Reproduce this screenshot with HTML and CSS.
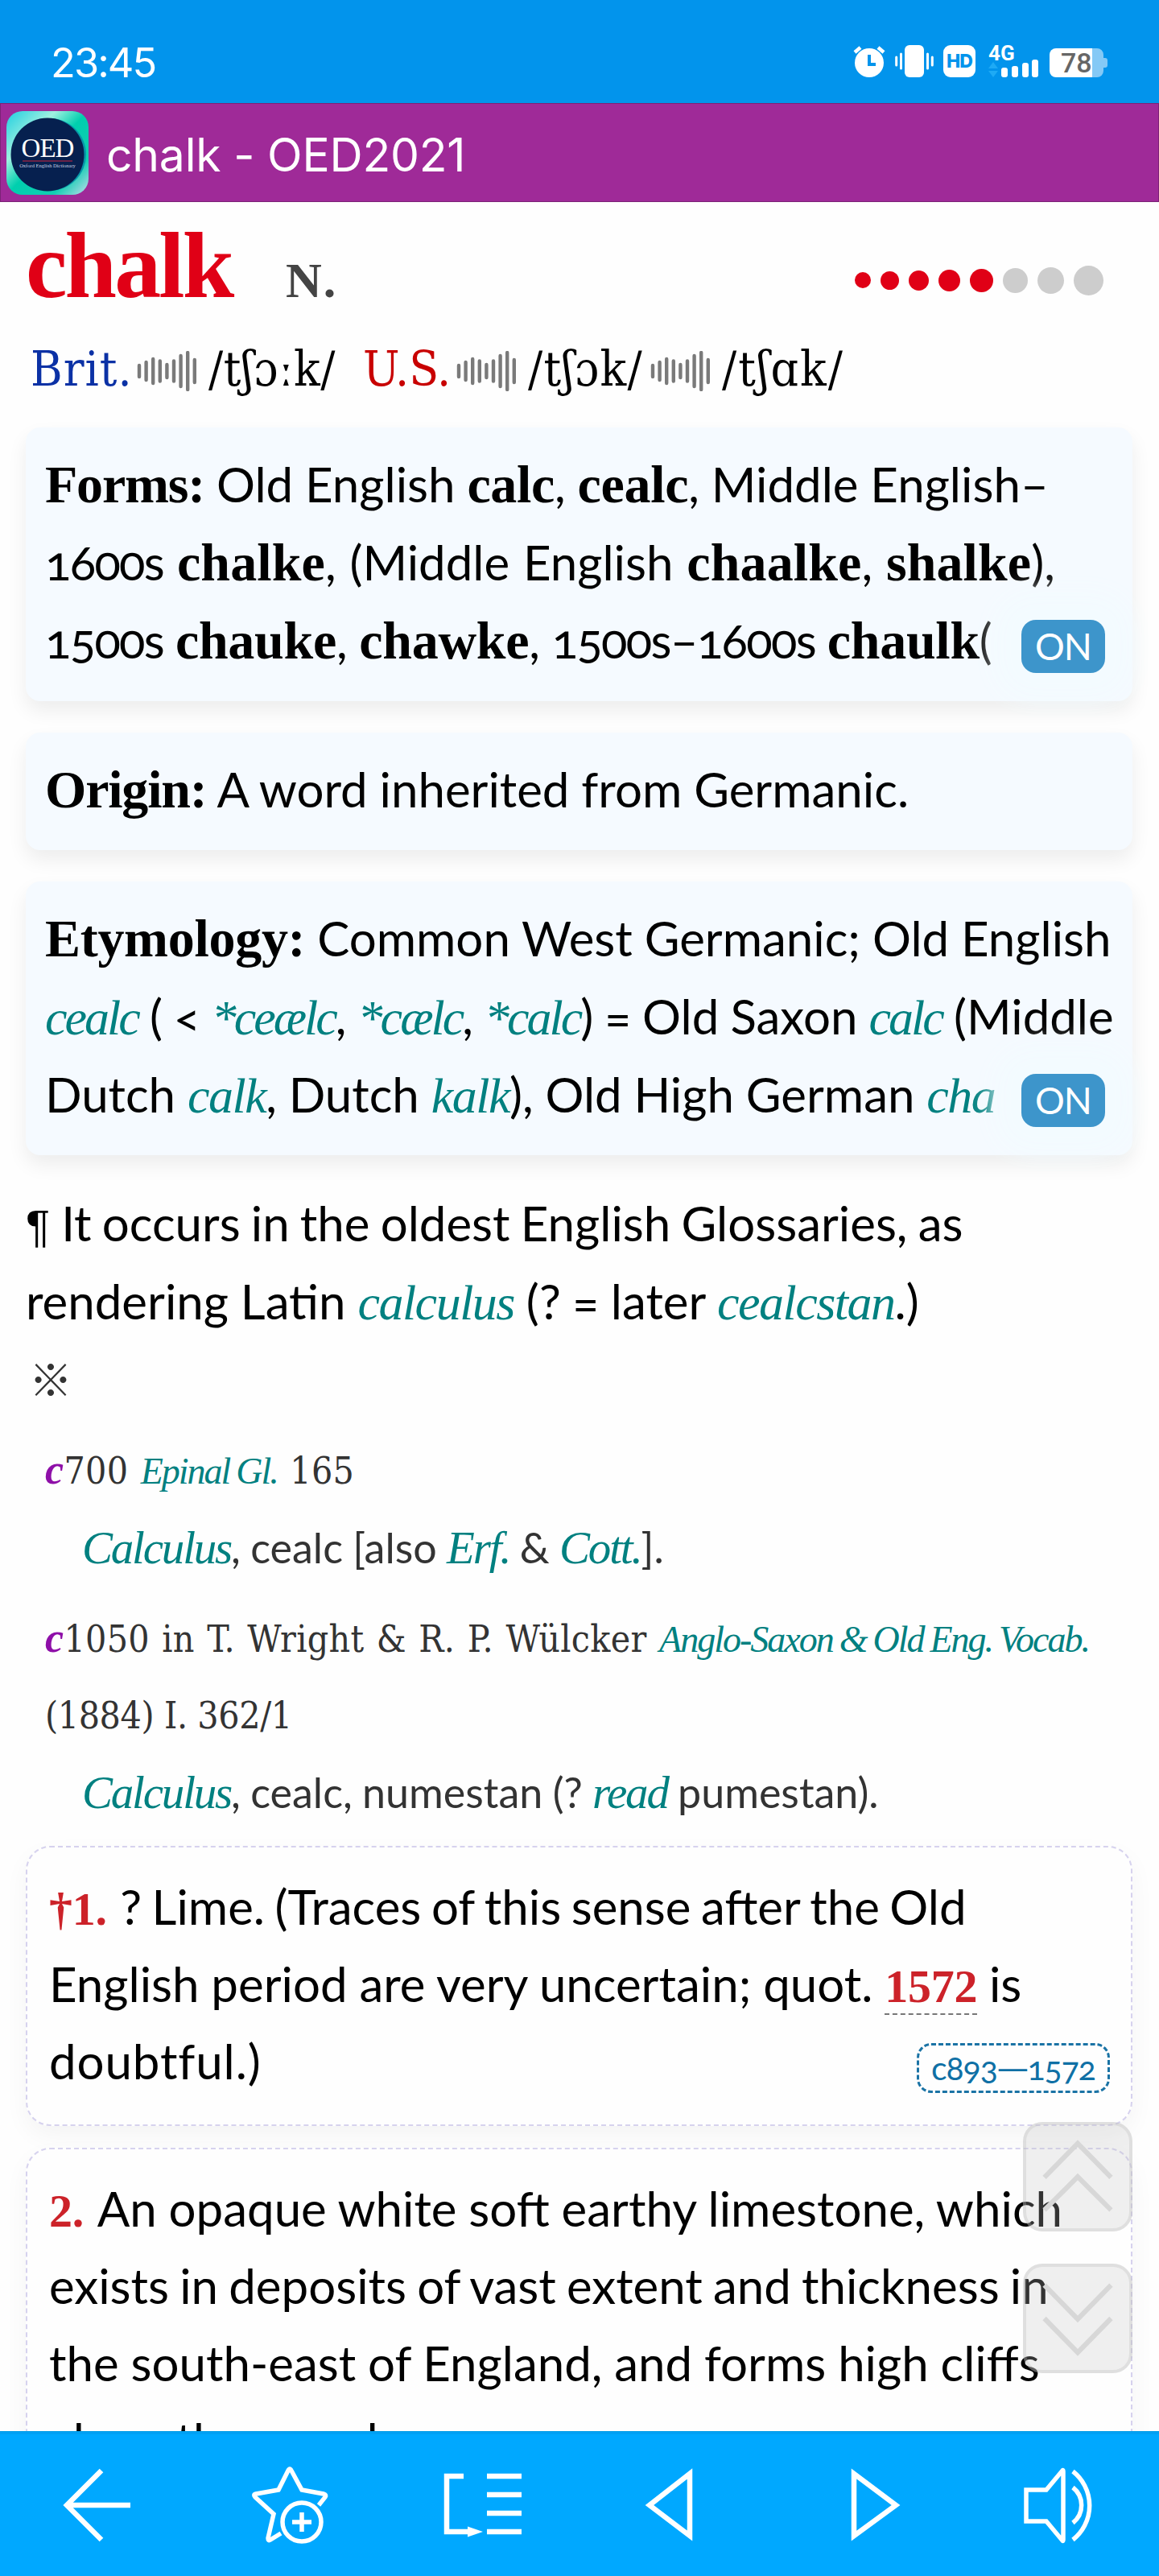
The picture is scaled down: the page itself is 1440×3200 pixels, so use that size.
FILE: index.html
```
<!DOCTYPE html>
<html lang="en">
<head>
    <meta charset="UTF-8">
    <meta name="viewport" content="width=device-width, initial-scale=1.0">
    <title>chalk - OED2021</title>
    <link rel="stylesheet" href="styles.css">
</head>
<body>
    <div class="status">
        <span class="time">23:45</span>
        <div class="status-icons">
            <svg class="alarm" width="40" height="40" viewBox="0 0 40 40">
                <circle cx="20" cy="22" r="18" fill="#fff"/>
                <path d="M20 12v12h8" fill="none" stroke="#0294ec" stroke-width="4"/>
                <path d="M2 9l7-6M31 3l7 6" stroke="#fff" stroke-width="4.5"/>
            </svg>
            <svg class="vibrate" width="48" height="40" viewBox="0 0 48 40">
                <rect x="12" width="24" height="40" rx="6" fill="#fff"/>
                <path d="M1.7 15v10M7.5 11v18M40.5 11v18M46.3 15v10" stroke="#fff" stroke-width="3" stroke-linecap="round"/>
            </svg>
            <span class="hd">HD</span>
            <svg class="signal" width="64" height="40" viewBox="0 0 64 40">
                <text x="0" y="19" class="net">4G</text>
                <path d="M0 29l6-8 6 8zM0 32h12l-6 8z" fill="#1eaaf5"/>
                <rect x="16" y="28" width="8" height="12" rx="3" fill="#fff"/>
                <rect x="29" y="26" width="8" height="14" rx="3" fill="#fff"/>
                <rect x="42" y="22" width="8" height="18" rx="3" fill="#fff"/>
                <rect x="54" y="18" width="8" height="22" rx="3" fill="#fff"/>
            </svg>
            <svg class="battery" width="72" height="40" viewBox="0 0 72 40">
                <path d="M53 4h6a8 8 0 0 1 8 8v4h2a3 3 0 0 1 3 3v6a3 3 0 0 1-3 3h-2v4a8 8 0 0 1-8 8h-6z" fill="#84c9f6"/>
                <path d="M8 4h45v36H8a8 8 0 0 1-8-8V12a8 8 0 0 1 8-8z" fill="#fff"/>
                <text x="14" y="34" class="percent">78</text>
            </svg>
        </div>
    </div>

    <div class="titlebar">
        <svg class="logo" width="102" height="104" viewBox="0 0 102 104">
            <defs>
                <linearGradient id="tile" x1="0" y1="0" x2="1" y2="1">
                    <stop offset="0" stop-color="#1fcfe0"/>
                    <stop offset=".3" stop-color="#9ff0e0"/>
                    <stop offset=".5" stop-color="#00cfae"/>
                    <stop offset=".78" stop-color="#12cdb2"/>
                    <stop offset="1" stop-color="#c4dcec"/>
                </linearGradient>
            </defs>
            <rect width="102" height="104" rx="20" fill="url(#tile)"/>
            <circle cx="54" cy="54" r="45" fill="#0795a8"/>
            <circle cx="51" cy="54" r="45.5" fill="#06204f"/>
            <text x="51" y="57" class="logo-name">OED</text>
            <path d="M20 62h62" stroke="#8c2345" stroke-width="1.5"/>
            <text x="51" y="70" class="logo-sub">Oxford English Dictionary</text>
        </svg>
        <span class="title">chalk - OED2021</span>
    </div>

    <main>
        <div class="head">
            <h1>chalk</h1>
            <span class="pos">N.</span>
            <div class="freq">
                <i class="d1 on"></i><i class="d2 on"></i><i class="d3 on"></i><i class="d4 on"></i><i class="d5 on"></i><i class="d6"></i><i class="d7"></i><i class="d8"></i>
            </div>
        </div>

        <svg width="0" height="0" class="defs">
            <symbol id="wave" viewBox="0 0 76 50">
                <path d="M4 18v14M12.6 14v22M21.2 10v30M29.8 12.5v25M38.4 17v16M47 12.5v25M55.6 6v38M64.2 2v46M72.8 11v28" stroke="#7a7a7a" stroke-width="4.4" stroke-linecap="round"/>
            </symbol>
        </svg>
        <div class="pron">
            <span class="brit">Brit.</span>
            <svg class="wave"><use href="#wave"/></svg>
            <span class="ipa ipa-uk">/tʃɔːk/</span>
            <span class="us">U.S.</span>
            <svg class="wave"><use href="#wave"/></svg>
            <span class="ipa ipa-us">/tʃɔk/</span>
            <svg class="wave"><use href="#wave"/></svg>
            <span class="ipa ipa-last">/tʃɑk/</span>
        </div>

        <section class="card">
            <div class="line"><b class="label">Forms:</b> Old English <b>calc</b>, <b>cealc</b>, Middle English–</div>
            <div class="line loose"><span class="num">1600s</span> <b>chalke</b>, (Middle English <b>chaalke</b>, <b>shalke</b>),</div>
            <div class="line"><span class="num">1500s</span> <b>chauke</b>, <b>chawke</b>, <span class="num">1500s–1600s</span> <b>chaulk</b>(</div>
            <span class="toggle">ON</span>
        </section>

        <section class="card">
            <div class="line"><b class="label">Origin:</b> A word inherited from Germanic.</div>
        </section>

        <section class="card">
            <div class="line"><b>Etymology:</b> Common West Germanic; Old English</div>
            <div class="line tight"><em>cealc</em> ( &lt; <em>*ceælc</em>, <em>*cælc</em>, <em>*calc</em>) = Old Saxon <em>calc</em> (Middle</div>
            <div class="line">Dutch <em>calk</em>, Dutch <em>kalk</em>), Old High German <em>cha</em></div>
            <span class="toggle">ON</span>
        </section>

        <div class="note">
            <div class="line close"><span class="pilcrow">¶</span> It occurs in the oldest English Glossaries, as</div>
            <div class="line">rendering Latin <em>calculus</em> (? = later <em>cealcstan</em>.)</div>
            <div class="line ref">※</div>
        </div>

        <div class="quote">
            <div class="cite"><b>c</b>700 <em>Epinal Gl.</em> 165</div>
            <div class="text"><em>Calculus</em>, cealc [also <em>Erf.</em> &amp; <em>Cott.</em>].</div>
        </div>
        <div class="quote">
            <div class="cite"><b>c</b>1050 in T. Wright &amp; R. P. Wülcker <em>Anglo-Saxon &amp; Old Eng. Vocab.</em></div>
            <div class="cite vol">(1884) I. 362/1</div>
            <div class="text"><em>Calculus</em>, cealc, numestan (? <em>read</em> pumestan).</div>
        </div>

        <section class="sense">
            <div class="line closer"><b>†1.</b> ? Lime. (Traces of this sense after the Old</div>
            <div class="line">English period are very uncertain; quot. <b class="link">1572</b> is</div>
            <div class="line last"><span>doubtful.)</span> <span class="dates">c893<span class="dash">—</span>1572</span></div>
        </section>

        <section class="sense">
            <div class="line"><b>2.</b> An opaque white soft earthy limestone, which</div>
            <div class="line close">exists in deposits of vast extent and thickness in</div>
            <div class="line">the south-east of England, and forms high cliffs</div>
            <div class="line">along the sea-shore.</div>
        </section>
    </main>

    <div class="scroll">
        <svg width="136" height="136" viewBox="0 0 136 136">
            <path d="M24 69l44-45 44 45M24 112l44-44 44 44"/>
        </svg>
        <svg width="136" height="136" viewBox="0 0 136 136">
            <path d="M24 24l44 45 44-45M24 68l44 45 44-45"/>
        </svg>
    </div>

    <nav class="toolbar">
        <svg viewBox="0 0 120 120">
            <path d="M66 17L23 60l43 43M23 60h79"/>
        </svg>
        <svg viewBox="0 0 120 120">
            <path d="M96 60l8-10q2-3-2-4l-27-5L62 17q-2-4-4 0L46 41l-28 5q-4 1-1 4l23 21-7 30q0 4 3 2l13-8" stroke-width="5.5"/>
            <circle cx="75" cy="81" r="24" stroke-width="5.5"/>
            <path d="M75 69v24M63 81h24" stroke-width="5.5"/>
        </svg>
        <svg viewBox="0 0 120 120">
            <path d="M36 24H15v69h30M65 24h43M65 47h43M65 70h43M65 93h43"/>
            <path d="M41 86.5L60 93l-19 6.5z" class="solid"/>
        </svg>
        <svg viewBox="0 0 120 120">
            <path d="M77 21v77L27 60z"/>
        </svg>
        <svg viewBox="0 0 120 120">
            <path d="M41 21v77L93 60z"/>
        </svg>
        <svg viewBox="0 0 120 120">
            <path d="M15 41h25l20-24q1-1 1 1v85q0 2-1 1L40 80H15z" stroke-width="5.5"/>
            <path d="M73 18a54 54 0 0 1 0 85M73 38a28 28 0 0 1 0 44" stroke-width="5.5"/>
        </svg>
    </nav>
</body>
</html>
```
FILE: styles.css
```
* {
    box-sizing: border-box;
}
body {
    margin: 0;
    height: 3200px;
    overflow: hidden;
    position: relative;
    display: flex;
    flex-direction: column;
    background: #fefefe;
    color: #000;
    font-family: Lato, "Open Sans", sans-serif;
    font-size: 60px;
    font-variant-numeric: oldstyle-nums;
}

/* phone status bar */
.status {
    flex: none;
    height: 128px;
    padding: 24px 64px 0 63px;
    display: flex;
    justify-content: space-between;
    align-items: center;
    background: #0294ec;
    color: #fff;
    font-family: Inter, Roboto, sans-serif;
    font-variant-numeric: normal;
}
.time {
    padding-top: 2px;
    font-size: 50.5px;
    letter-spacing: -1.9px;
}
.status-icons {
    display: flex;
    gap: 12px;
}
.status-icons svg {
    overflow: visible;
}
.hd {
    width: 40px;
    height: 40px;
    border-radius: 9px;
    background: #fff;
    color: #0294ec;
    font: 800 23px/40px Inter, sans-serif;
    letter-spacing: -1px;
    text-align: center;
}
.signal {
    margin-left: 4px;
}
.net {
    font: 700 26px Roboto, sans-serif;
    fill: #fff;
}
.percent {
    font: 500 34px Roboto, sans-serif;
    fill: #666;
}

.titlebar {
    flex: none;
    height: 123px;
    padding: 0 7px;
    display: flex;
    align-items: center;
    gap: 22px;
    background: #9f2a98;
    border: 1px solid #7c2377;
    color: #fff;
}
.title {
    padding-top: 5px;
    font: 57px Inter, Roboto, sans-serif;
    letter-spacing: -0.2px;
}
.logo-name {
    font: 33px "Liberation Serif", serif;
    letter-spacing: -1px;
    text-anchor: middle;
    fill: #fff;
}
.logo-sub {
    font: 6.5px "Liberation Serif", serif;
    text-anchor: middle;
    fill: #c9d2e4;
}

main {
    flex: 1;
    min-height: 0;
    overflow: hidden;
    padding: 4px 33px 0 32px;
}
.defs {
    display: block;
}

/* headword */
.head {
    height: 150px;
    display: flex;
    align-items: baseline;
    line-height: 150px;
    font-family: "Liberation Serif", serif;
}
h1 {
    margin: 0;
    width: 323px;
    font-size: 116px;
    color: #e00016;
    letter-spacing: -2.9px;
}
.pos {
    font-weight: bold;
    font-size: 62px;
    color: #444;
    letter-spacing: 2px;
}
.freq {
    margin-left: auto;
    margin-right: 36px;
    align-self: center;
    height: 36px;
    margin-top: 36px;
    display: flex;
    align-items: center;
    gap: 12px;
}
.freq i {
    border-radius: 50%;
    background: #cdcdcd;
}
.freq .on {
    background: #e00016;
}
.d1 { width: 20px; height: 20px; }
.d2 { width: 23px; height: 23px; }
.d3 { width: 25px; height: 25px; }
.d4 { width: 27px; height: 27px; }
.d5 { width: 29px; height: 29px; }
.d6 { width: 31px; height: 31px; }
.d7 { width: 33px; height: 33px; }
.d8 { width: 37px; height: 37px; }

/* pronunciation */
.pron {
    margin: 6px 0 25px;
    padding-left: 6px;
    height: 95px;
    line-height: 95px;
    display: flex;
    align-items: center;
    white-space: nowrap;
    font-family: "DejaVu Serif Condensed", "DejaVu Serif", serif;
    font-stretch: condensed;
    font-size: 60px;
}
.brit {
    width: 131px;
    color: #0b31a5;
    letter-spacing: 1px;
}
.us {
    width: 115px;
    color: #c80000;
}
.wave {
    width: 76px;
    height: 50px;
    margin-top: 5px;
}
.ipa {
    margin-left: 14px;
    letter-spacing: 0.6px;
}
.ipa-uk {
    width: 192px;
}
.ipa-us {
    width: 151px;
    letter-spacing: 1.2px;
}
.ipa-last {
    letter-spacing: 2px;
}

/* text lines */
.line {
    height: 97px;
    line-height: 97px;
    white-space: nowrap;
    word-spacing: -0.5px;
}
.line b,
.line em {
    line-height: 1;
    font-family: "Liberation Serif", serif;
}
.line b {
    font-size: 66px;
    letter-spacing: -0.3px;
}
.line .label {
    letter-spacing: -1.2px;
}
.num {
    letter-spacing: -1.7px;
}
.loose {
    word-spacing: 1.5px;
}
.loose b {
    letter-spacing: 0.1px;
}
em {
    color: #008080;
    font-size: 62px;
    letter-spacing: -1.5px;
}
.tight {
    word-spacing: -1.2px;
}
.tight em {
    letter-spacing: -3px;
}
.close,
.sense .close {
    word-spacing: -2.2px;
}
.closer {
    word-spacing: -2.8px;
}

.card {
    position: relative;
    margin-bottom: 39px;
    padding: 22px 24px 27px;
    border-radius: 18px;
    background: #f5faff;
    box-shadow: 0 12px 24px rgba(0, 0, 0, .07);
}
.toggle {
    position: absolute;
    right: 34px;
    bottom: 35px;
    width: 104px;
    height: 66px;
    border-radius: 18px;
    background: #3d95cb;
    box-shadow: 0 0 30px 34px #f3fbff;
    color: #fff;
    font-size: 46px;
    line-height: 65px;
    letter-spacing: -1px;
    text-align: center;
}

.note {
    margin-top: -3px;
}
.pilcrow {
    display: inline-block;
    width: 31px;
    font-family: "Liberation Sans", sans-serif;
    font-size: 56px;
    line-height: 1;
}
.ref {
    padding-left: 4px;
    font-family: "Noto Sans CJK JP", sans-serif;
    font-size: 54px;
    line-height: 94px;
    color: #333;
}

/* quotations */
.quote {
    margin: 18px 0 19px;
    padding-left: 24px;
    color: #333;
    white-space: nowrap;
}
.cite,
.text {
    height: 95px;
    line-height: 95px;
}
.cite {
    font-family: "DejaVu Serif Condensed", "DejaVu Serif", serif;
    font-stretch: condensed;
    font-size: 46px;
    letter-spacing: 0.3px;
    word-spacing: 2px;
}
.vol {
    letter-spacing: -0.4px;
    word-spacing: 0;
}
.cite b {
    color: #8e0fa8;
    font: italic bold 52px/1 "Liberation Serif", serif;
}
.cite em {
    font: italic 46px/1 "Liberation Serif", serif;
    letter-spacing: -2px;
    word-spacing: -1.5px;
}
.text {
    padding-left: 46px;
    font-size: 52px;
    word-spacing: -1px;
}
.text em {
    font: italic 57px/1 "Liberation Serif", serif;
    letter-spacing: -2.2px;
}

/* senses */
.sense {
    margin-bottom: 27px;
    padding: 25px 26px 31px 27px;
    border: 2px dashed #d6d2ee;
    border-radius: 30px;
    background: #fefefe;
    box-shadow: 0 12px 30px rgba(0, 0, 0, .045);
}
.sense .line {
    height: 96px;
    line-height: 96px;
}
.sense .closer {
    word-spacing: -2.8px;
}
.sense .line b {
    margin-right: 4px;
    color: #cc2229;
    font-size: 58px;
}
.sense .line .link {
    margin-right: 0;
    border-bottom: 2px dashed #777;
    padding-bottom: 1px;
}
.last {
    display: flex;
    justify-content: space-between;
    letter-spacing: 0.9px;
}
.dates {
    display: flex;
    height: 62px;
    margin-top: 26px;
    padding: 0 15px;
    border: 3px dashed #1a73a5;
    border-radius: 18px;
    color: #0f70a5;
    font-size: 41px;
    line-height: 55px;
    letter-spacing: -1px;
}
.dash {
    transform: scaleX(1.3);
    margin: 0 3px;
}

/* floating page buttons */
.scroll {
    position: absolute;
    right: 33px;
    top: 2636px;
    display: flex;
    flex-direction: column;
    gap: 40px;
}
.scroll svg {
    border: 4px solid rgba(190, 190, 190, .3);
    border-radius: 24px;
    background: rgba(196, 196, 196, .26);
}
.scroll path {
    fill: none;
    stroke: #d7d7d7;
    stroke-width: 6.5;
}

.toolbar {
    flex: none;
    height: 180px;
    padding-top: 31px;
    display: grid;
    grid-template-columns: repeat(6, 240px);
    justify-items: center;
    background: #00a8ff;
    border-top: 1px solid #009ce8;
    box-shadow: inset 0 3px 0 #00a0f4;
}
.toolbar svg {
    width: 120px;
    height: 120px;
    fill: none;
    stroke: #fff;
    stroke-width: 6.5;
}
.toolbar .solid {
    fill: #fff;
    stroke: none;
}
```
